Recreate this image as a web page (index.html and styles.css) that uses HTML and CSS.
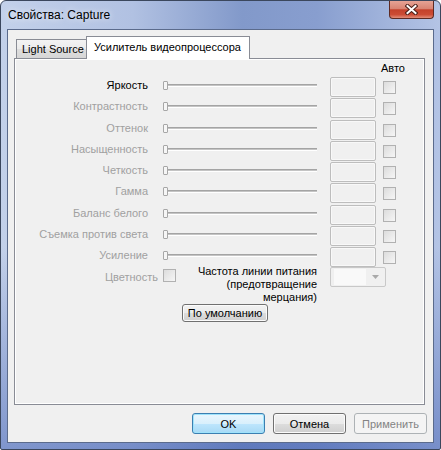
FILE: index.html
```html
<!DOCTYPE html>
<html>
<head>
    <title>Свойства: Capture</title>
    <link rel="stylesheet" href="styles.css">
</head>
<body>
    <div class="window">
        <div class="titlebar">
            <div class="title">Свойства: Capture</div>
            <div class="close-button">
                <svg width="13" height="11" viewBox="0 0 13 11">
                    <path d="M2.5 2 L10.5 9 M10.5 2 L2.5 9" stroke="#4a1f18" stroke-width="4" stroke-linecap="square"/>
                    <path d="M2.5 2 L10.5 9 M10.5 2 L2.5 9" stroke="#ffffff" stroke-width="2" stroke-linecap="square"/>
                </svg>
            </div>
        </div>

        <div class="client">
            <div class="tabs">
                <div class="tab">Light Source</div>
                <div class="tab active">Усилитель видеопроцессора</div>
            </div>

            <div class="tab-page">
                <div class="auto-header">Авто</div>

                <div class="controls">
                    <div class="label enabled">Яркость</div>
                    <div class="slider"><div class="thumb"></div><div class="track"></div></div>
                    <div class="edit"></div>
                    <div class="check"></div>

                    <div class="label">Контрастность</div>
                    <div class="slider"><div class="thumb"></div><div class="track"></div></div>
                    <div class="edit"></div>
                    <div class="check"></div>

                    <div class="label">Оттенок</div>
                    <div class="slider"><div class="thumb"></div><div class="track"></div></div>
                    <div class="edit"></div>
                    <div class="check"></div>

                    <div class="label">Насыщенность</div>
                    <div class="slider"><div class="thumb"></div><div class="track"></div></div>
                    <div class="edit"></div>
                    <div class="check"></div>

                    <div class="label">Четкость</div>
                    <div class="slider"><div class="thumb"></div><div class="track"></div></div>
                    <div class="edit"></div>
                    <div class="check"></div>

                    <div class="label">Гамма</div>
                    <div class="slider"><div class="thumb"></div><div class="track"></div></div>
                    <div class="edit"></div>
                    <div class="check"></div>

                    <div class="label">Баланс белого</div>
                    <div class="slider"><div class="thumb"></div><div class="track"></div></div>
                    <div class="edit"></div>
                    <div class="check"></div>

                    <div class="label">Съемка против света</div>
                    <div class="slider"><div class="thumb"></div><div class="track"></div></div>
                    <div class="edit"></div>
                    <div class="check"></div>

                    <div class="label">Усиление</div>
                    <div class="slider"><div class="thumb"></div><div class="track"></div></div>
                    <div class="edit"></div>
                    <div class="check"></div>
                </div>

                <div class="extra-row">
                    <div class="color-label">Цветность</div>
                    <div class="check color-check"></div>
                    <div class="freq-label">Частота линии питания<br>(предотвращение<br>мерцания)</div>
                    <div class="combo">
                        <div class="combo-field"></div>
                        <div class="combo-arrow">
                            <svg width="7" height="4" viewBox="0 0 7 4"><path d="M0 0 H7 L3.5 4 Z" fill="#a9a9a9"/></svg>
                        </div>
                    </div>
                </div>

                <button class="button default-values">По умолчанию</button>
            </div>

            <div class="dialog-buttons">
                <button class="button default">OK</button>
                <button class="button">Отмена</button>
                <button class="button" disabled>Применить</button>
            </div>
        </div>
    </div>
</body>
</html>
```

FILE: styles.css
```css
/* Halaman dasar */
body {
    margin: 0;
    font-family: "Liberation Sans", Arial, sans-serif;
    font-size: 11px;
    color: #000;
}

/* Bingkai jendela Aero */
.window {
    width: 441px;
    height: 450px;
    box-sizing: border-box;
    display: flex;
    flex-direction: column;
    padding: 0 6px 6px 6px;
    border: 1px solid #3b475d;
    border-radius: 6px 6px 2px 2px;
    background:
        linear-gradient(to bottom, rgba(255, 255, 255, 0) 55%, rgba(60, 90, 175, 0.5) 100%),
        linear-gradient(to right, #c3d1ea 0%, #b1c1e2 30%, #8299ca 55%, #889ecf 72%, #b4c4e5 100%);
}

.titlebar {
    height: 28px;
    display: flex;
    justify-content: space-between;
    align-items: center;
}

.title {
    padding-left: 1px;
    font-size: 12px;
    text-shadow: 0 0 6px rgba(255, 255, 255, 0.9);
}

.close-button {
    align-self: flex-start;
    width: 45px;
    height: 18px;
    box-sizing: border-box;
    display: flex;
    justify-content: center;
    align-items: center;
    border: 1px solid #5e2a23;
    border-top: none;
    border-radius: 0 0 4px 4px;
    background: linear-gradient(#e6a395 0%, #d98473 45%, #c4412b 52%, #cc4c35 80%, #e28d79 100%);
}

/* Area isi jendela */
.client {
    flex: 1;
    display: flex;
    flex-direction: column;
    border: 1px solid #5b6b8c;
    background-color: #f0f0f0;
}

/* Tab */
.tabs {
    display: flex;
    align-items: flex-end;
    height: 22px;
    margin: 6px 8px 0 6px;
    padding-left: 2px;
}

.tab {
    width: 71px;
    height: 19px;
    box-sizing: border-box;
    padding-left: 5px;
    border: 1px solid #898c95;
    border-bottom: none;
    line-height: 18px;
    white-space: nowrap;
    background: linear-gradient(#f3f3f3 0%, #ebebeb 50%, #dedede 51%, #d6d6d6 100%);
}

.tab.active {
    width: 164px;
    height: 23px;
    margin-left: -1px;
    margin-bottom: -1px;
    padding-left: 7px;
    line-height: 20px;
    background: #fff;
    position: relative;
    z-index: 1;
}

.tab-page {
    height: 347px;
    box-sizing: border-box;
    margin: 0 8px 0 6px;
    border: 1px solid #898c95;
    box-shadow: inset 0 0 0 1px #fff;
    background-color: #f0f0f0;
}

.auto-header {
    height: 18px;
    line-height: 18px;
    padding-left: 366px;
}

/* Baris pengaturan */
.controls {
    display: grid;
    grid-template-columns: 133px 169px 59px 20px;
    grid-auto-rows: 21.25px;
    align-items: start;
}

.label {
    line-height: 17px;
    text-align: right;
    white-space: nowrap;
    color: #a0a0a0;
}

.label.enabled {
    color: #000;
}

.slider {
    height: 17px;
    display: flex;
    align-items: center;
    padding-left: 15px;
}

.thumb {
    width: 5px;
    height: 9px;
    box-sizing: border-box;
    border: 1px solid #a7a7a7;
    border-radius: 1px;
    background-color: #f6f6f6;
}

.track {
    flex: 1;
    height: 1px;
    border-top: 1px solid #a4a4a4;
    border-bottom: 1px solid #fff;
    background-color: #c4c4c4;
}

.edit {
    justify-self: end;
    width: 46px;
    height: 20px;
    box-sizing: border-box;
    border: 1px solid #bdbdbd;
    border-radius: 2px;
    box-shadow: inset 0 0 0 1px #f8f8f8;
    background-color: #f0f0f0;
}

.check {
    justify-self: end;
    width: 13px;
    height: 13px;
    margin-top: 4px;
    box-sizing: border-box;
    border: 1px solid #b1b1b1;
    background: linear-gradient(135deg, #dcdcdc, #f6f6f6);
}

/* Cvetnost dan frekuensi */
.extra-row {
    display: flex;
    align-items: flex-start;
    margin-top: -3px;
}

.color-label {
    width: 143px;
    margin-top: 6px;
    line-height: 13px;
    text-align: right;
    color: #a0a0a0;
}

.color-check {
    margin-top: 4px;
    margin-left: 5px;
}

.freq-label {
    width: 141px;
    line-height: 13px;
    text-align: right;
}

.combo {
    display: flex;
    width: 56px;
    height: 20px;
    margin: 2px 0 0 13px;
    padding: 1px 0 1px 3px;
    box-sizing: border-box;
    border: 1px solid #c8c8c8;
    border-radius: 2px;
    background-color: #f0f0f0;
}

.combo-field {
    width: 32px;
    background-color: #f9f9f9;
}

.combo-arrow {
    flex: 1;
    display: flex;
    justify-content: center;
    align-items: center;
}

/* Tombol gaya Windows 7 */
.button {
    width: 73px;
    height: 21px;
    box-sizing: border-box;
    padding: 0;
    font-family: inherit;
    font-size: 11px;
    color: #000;
    border: 1px solid #707070;
    border-radius: 3px;
    box-shadow: inset 0 0 0 1px #fbfbfb;
    background: linear-gradient(#f2f2f2 0%, #ebebeb 50%, #dddddd 51%, #cfcfcf 100%);
}

.button.default {
    border-color: #3c7fb1;
    box-shadow: inset 0 0 0 1px #9fe3fb;
    background: linear-gradient(#eaf6fd 0%, #d9f0fc 50%, #bee6fd 51%, #a7d9f5 100%);
}

.button:disabled {
    color: #838383;
    border-color: #adb2b5;
    box-shadow: none;
    background: #f4f4f4;
}

.default-values {
    display: block;
    width: 86px;
    height: 18px;
    margin: 0 0 0 167px;
}

.dialog-buttons {
    display: flex;
    justify-content: flex-end;
    gap: 8px;
    margin: 8px 6px 0 0;
}
```
